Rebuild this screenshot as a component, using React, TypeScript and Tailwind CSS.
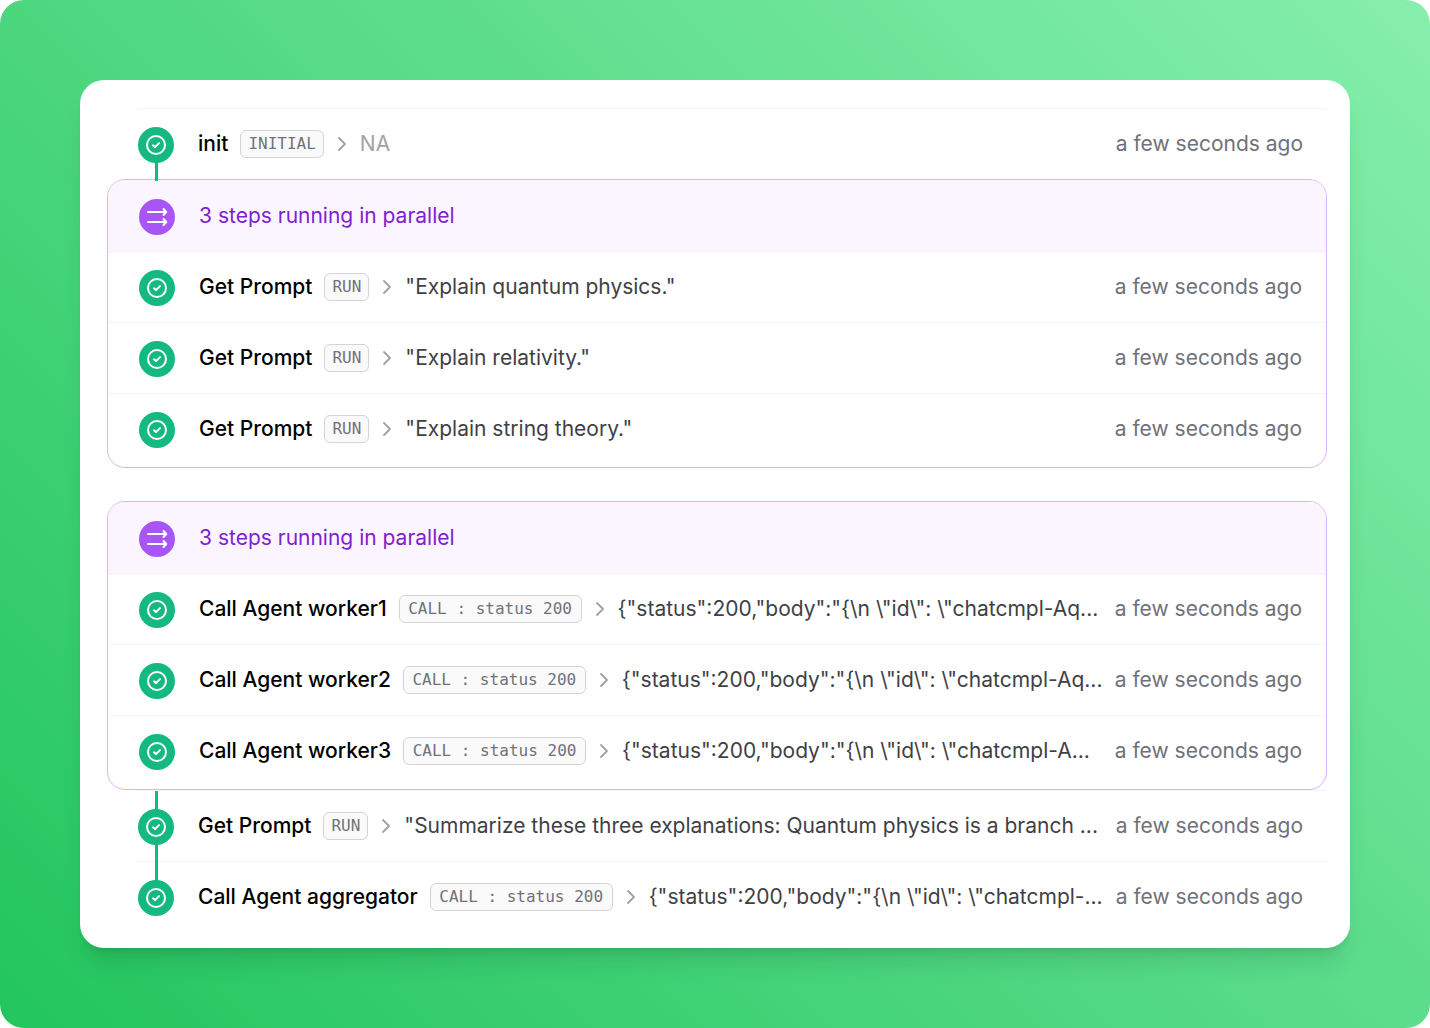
import type { ReactNode } from "react";

type Step = { name: string; badge: string; output: string; muted?: boolean };

const promptSteps: Step[] = [
  { name: "Get Prompt", badge: "RUN", output: '"Explain quantum physics."' },
  { name: "Get Prompt", badge: "RUN", output: '"Explain relativity."' },
  { name: "Get Prompt", badge: "RUN", output: '"Explain string theory."' },
];

const workerSteps: Step[] = [
  { name: "Call Agent worker1", badge: "CALL : status 200", output: '{"status":200,"body":"{\\n \\"id\\": \\"chatcmpl-Aq...' },
  { name: "Call Agent worker2", badge: "CALL : status 200", output: '{"status":200,"body":"{\\n \\"id\\": \\"chatcmpl-Aq...' },
  { name: "Call Agent worker3", badge: "CALL : status 200", output: '{"status":200,"body":"{\\n \\"id\\": \\"chatcmpl-A...' },
];

const initStep: Step = { name: "init", badge: "INITIAL", output: "NA", muted: true };
const summaryStep: Step = {
  name: "Get Prompt",
  badge: "RUN",
  output: '"Summarize these three explanations: Quantum physics is a branch ...',
};
const aggregatorStep: Step = {
  name: "Call Agent aggregator",
  badge: "CALL : status 200",
  output: '{"status":200,"body":"{\\n \\"id\\": \\"chatcmpl-...',
};

function CheckIcon() {
  return (
    <span className="relative z-20 flex size-9 items-center justify-center rounded-full bg-[#14b981] text-white">
      <svg viewBox="0 0 20 20" className="size-5" fill="none" stroke="currentColor" aria-hidden="true">
        <circle cx="10" cy="10" r="9" strokeWidth="2" />
        <path d="M7 10.3 9 12.1 13 8.1" strokeWidth="2" strokeLinecap="round" strokeLinejoin="round" />
      </svg>
    </span>
  );
}

function ParallelIcon() {
  return (
    <span className="flex size-9 shrink-0 items-center justify-center rounded-full bg-[#a855f7] text-white">
      <svg
        viewBox="0 0 24 24"
        className="size-6"
        fill="none"
        stroke="currentColor"
        strokeWidth="2"
        strokeLinecap="round"
        strokeLinejoin="round"
        aria-hidden="true"
      >
        <path d="M3 7H21M18.5 4 21.3 7 18.5 10" />
        <path d="M3 17H21M18.5 14 21.3 17 18.5 20" />
      </svg>
    </span>
  );
}

function Chevron() {
  return (
    <svg
      viewBox="0 0 24 24"
      className="mx-1.5 size-6 shrink-0 text-[#a1a1aa]"
      fill="none"
      stroke="currentColor"
      strokeWidth="1.8"
      strokeLinecap="round"
      strokeLinejoin="round"
      aria-hidden="true"
    >
      <path d="M9 6 15 12 9 18" />
    </svg>
  );
}

function Badge({ label }: { label: string }) {
  const base =
    "ml-3 shrink-0 rounded-md border border-[#d4d4d8] bg-[#fafafa] px-[7px] text-center font-['DejaVu_Sans_Mono',monospace] text-base leading-[26px] text-[#71717a]";
  return <span className={label.startsWith("CALL") ? `${base} min-w-[183px]` : base}>{label}</span>;
}

function StepRow({ step, connector }: { step: Step; connector?: ReactNode }) {
  return (
    <>
      <span className="relative flex shrink-0 items-center self-stretch pt-0.5">
        {connector}
        <CheckIcon />
      </span>
      <span className="ml-6 shrink-0 font-medium text-black">{step.name}</span>
      <Badge label={step.badge} />
      <Chevron />
      <span className={step.muted ? "min-w-0 flex-1 truncate text-[#a3a3a3]" : "min-w-0 flex-1 truncate text-[#3f3f46]"}>
        {step.output}
      </span>
      <time className="ml-3 shrink-0 text-[#71717a]">a few seconds ago</time>
    </>
  );
}

function OuterStep({ step, connector }: { step: Step; connector: ReactNode }) {
  return (
    <li className="ml-[30px] flex h-[71px] items-center border-t border-[#f4f4f5] pr-6 pl-px">
      <StepRow step={step} connector={connector} />
    </li>
  );
}

function ParallelGroup({ steps }: { steps: Step[] }) {
  return (
    <section className="rounded-[18px] border border-[#d8b4fe] pb-[3px]">
      <h2 className="flex h-[71px] items-center gap-6 rounded-t-[17px] bg-[#faf5ff] pl-[31px] font-normal text-[#7e22ce] shadow-[0_2px_0_#faf5ff]">
        <span className="pt-[3px]">
          <ParallelIcon />
        </span>
        {steps.length} steps running in parallel
      </h2>
      <ul>
        {steps.map((step, i) => (
          <li key={i} className="flex h-[71px] items-center border-t border-[#f4f4f5] pr-6 pl-[31px]">
            <StepRow step={step} />
          </li>
        ))}
      </ul>
    </section>
  );
}

export default function App() {
  return (
    <main className="min-h-screen rounded-3xl bg-[linear-gradient(45deg,#22c55e,#86efac)] p-20 font-['Inter',sans-serif] text-[21px] leading-8">
      <ol className="rounded-3xl bg-white pt-7 pr-[23px] pb-4 pl-[27px] shadow-[0_20px_25px_-5px_rgba(0,0,0,0.1),0_8px_10px_-6px_rgba(0,0,0,0.1)]">
        <OuterStep
          step={initStep}
          connector={<span className="absolute top-1/2 -bottom-0.5 left-[17px] z-10 w-[3px] bg-[#14b981]" />}
        />
        <li className="mb-[33px]">
          <ParallelGroup steps={promptSteps} />
        </li>
        <li>
          <ParallelGroup steps={workerSteps} />
        </li>
        <OuterStep
          step={summaryStep}
          connector={<span className="absolute inset-y-0 left-[17px] w-[3px] bg-[#14b981]" />}
        />
        <OuterStep
          step={aggregatorStep}
          connector={<span className="absolute -top-px bottom-1/2 left-[17px] w-[3px] bg-[#14b981]" />}
        />
      </ol>
    </main>
  );
}
